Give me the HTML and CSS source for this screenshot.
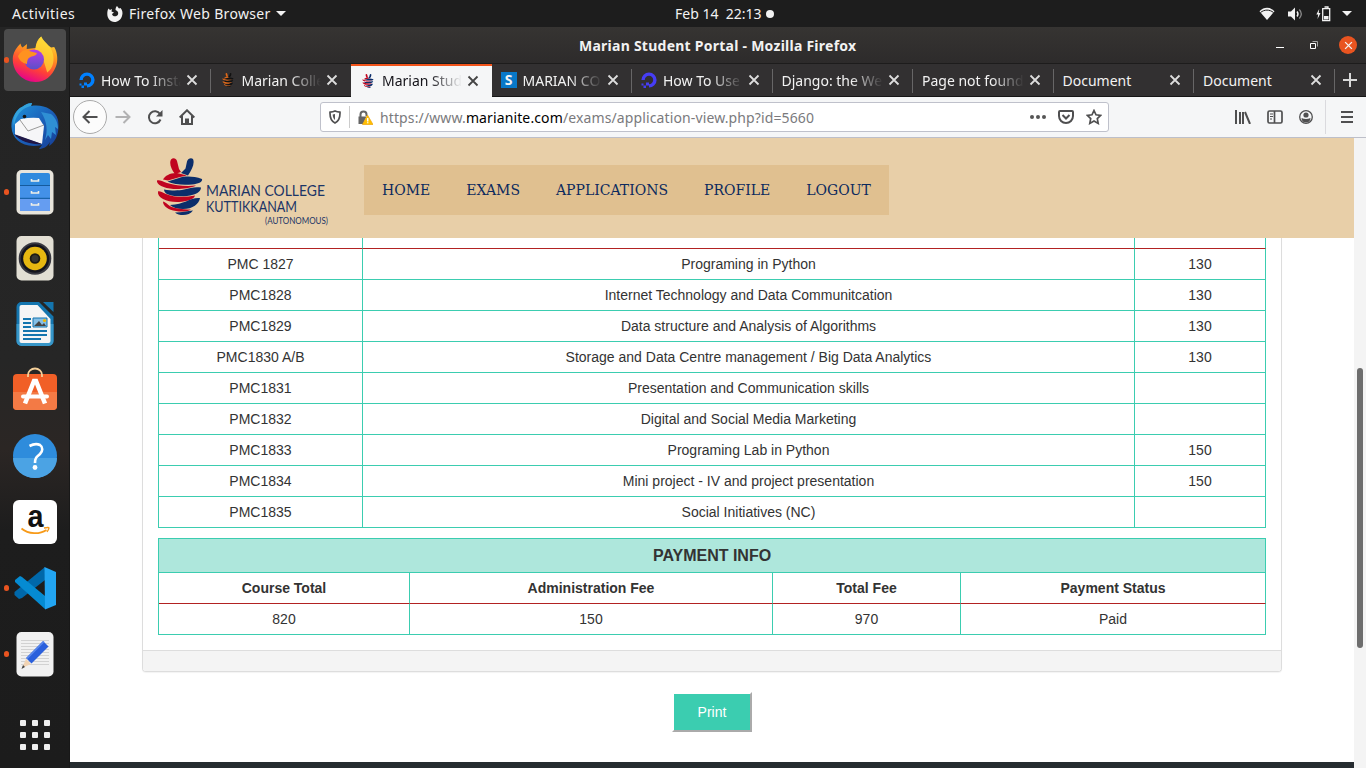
FILE: index.html
```html
<!DOCTYPE html>
<html lang="en">
<head>
<meta charset="utf-8">
<title>Marian Student Portal</title>
<link rel="stylesheet" href="styles.css">
</head>
<body>
<svg width="0" height="0" class="defs">
  <defs>
    <symbol id="x" viewBox="0 0 12 12"><path d="M1.500 1.500l9 9M10.500 1.500l-9 9" fill="none" stroke="currentColor" stroke-width="1.800"/></symbol>
    <symbol id="ocean" viewBox="0 0 16 16"><path d="M8 13.900A5.900 5.900 0 1 0 2.100 8" fill="none" stroke="currentColor" stroke-width="3.400"/><path d="M5 10.500h3v3H5zM2.500 13.500H5V16H2.500zM.5 11.500h2v2h-2z" fill="currentColor"/></symbol>
    <symbol id="fruit" viewBox="0 0 46 57">
      <path class="fa" d="M14 1.500c2-2 5-1.500 6 1.500l2 8 2 3-6 2C14 11 12 5 14 1.500z"/>
      <path class="fb" d="M36 1c-2-1.500-5-.5-6 2.500l-1.500 7L24 15l7 2.500C35 12 38 5 36 1z"/>
      <path class="fa" d="M6 21.500c2-4 8-7 14-6.500l10 2.500-7 1.500-12 3.500z"/>
      <path class="fb" d="M10.500 23.500L22 20c6-2 14-2 23 1 1 3-4 5-10 5.500-8 .5-18 .5-24.500-3z"/>
      <path class="fa" d="M0 22.500c2-1 5 .5 10 2.500 9 2.500 19 3.500 29 2.500-3 2-10 3-17 3.500C11 31.500-1 28 0 22.500z"/>
      <path class="fb" d="M7 31.500c9 1.500 15 1 20 0 6-1.500 11-3 17-2 0 4-5 7.500-14 8.500C20 39 7 38 7 31.500z"/>
      <path class="fa" d="M1 33.500c1-1 4 .5 8 2.500 8 3.500 19 3.500 29 1.500-1 4-8 6-16 6.500C10 44.500 0 40 1 33.500z"/>
      <path class="fb" d="M13 47c7-.5 12-2 16-3.500 5-2.500 9-4 14-3.500-1 6-7 11-17 11-6 0-10-1.500-13-4z"/>
      <path class="fa" d="M6 43.500c4 1 5 5 12 6.500 6 1.500 12 1.500 16 1.500-4 2.500-10 2.500-15 1.500C11 52 6 48 6 43.500z"/>
      <path class="fb" d="M18 54.500c7 0 12-1.500 18-2-2 3-6 4.500-10 4.500-3 0-6-.5-8-2.500z"/>
    </symbol>
  </defs>
</svg>

<header class="topbar">
  <span class="activities">Activities</span>
  <svg class="ffmini" width="16" height="16" viewBox="0 0 16 16"><path d="M1.500 2.500L3 4l2-1-.5 2.500L7 6.500 5 8c.5 3 5 3 6 .5.800-2-.5-4-2.500-4.500C8.500 2 9 1 10 0l2 2.500L13.500 2c2 2 2.500 5 1.500 8-1 3.500-4 6-7.500 6C3 15.800.3 12 .3 8c0-2 .2-4 1.200-5.500z" fill="#f2f2f2"/></svg>
  <span class="appname">Firefox Web Browser</span>
  <i class="caret"></i>
  <span class="clock">Feb 14&nbsp; 22:13</span><i class="clockdot"></i>
  <div class="status">
    <svg width="16" height="14" viewBox="0 0 16 14"><path d="M.5 4.200C5-.4 11-.4 15.500 4.200L8 13z" fill="#f2f2f2"/><path d="M1.500 5.500c4-3.200 9-3.200 13 0" fill="none" stroke="#1d1d1d" stroke-width="1"/></svg>
    <svg width="15" height="14" viewBox="0 0 15 14"><path d="M0 4.500h3L7 .5v13l-4-4H0z" fill="#f2f2f2"/><path d="M9 4.500q2 2.500 0 5" fill="none" stroke="#f2f2f2" stroke-width="1.400"/><path d="M11.300 2.500q4 4.500 0 9" fill="none" stroke="#8a8a8a" stroke-width="1.300"/></svg>
    <svg width="15" height="16" viewBox="0 0 15 16"><path d="M3.200 3L.3 8.500h1.900L1.500 13l3-6H2.700z" fill="#f2f2f2"/><path d="M6.700 2.700h7v12h-7zM8.500 1h3.500v1.500" fill="none" stroke="#f2f2f2" stroke-width="1.300"/><path d="M8 10h4.500v3.500H8z" fill="#f2f2f2"/></svg>
    <i class="caret"></i>
  </div>
</header>

<div class="desk">
  <nav class="dock">
    <div class="slot run active"><svg width="48" height="48" viewBox="0 0 48 48">
      <defs><linearGradient id="g1" x1=".75" y1="0" x2=".35" y2="1"><stop offset="0" stop-color="#ffe23c"/><stop offset=".35" stop-color="#ff9a1f"/><stop offset=".7" stop-color="#ff4038"/><stop offset="1" stop-color="#e4008f"/></linearGradient>
      <linearGradient id="g1b" x1="0" y1="0" x2="0" y2="1"><stop offset="0" stop-color="#b83be8"/><stop offset="1" stop-color="#5a50c8"/></linearGradient></defs>
      <path d="M2 20c1-5 4-9 7.500-12.500.4 2 1 3 2 4L16 8l-.3 5 9-1c0-5 2-8.500 5.500-11.500 1.500 4 5 6 7 9l3 2 3-.5c3.500 6 4 14 1.500 20C41 40 34 46 24.500 46 11 46 0 34 2 20z" fill="url(#g1)"/>
      <path d="M24 14c1-6 3-10.500 6.200-13.500 2 5 9 8.500 11 15 3 8 1 17-5 21l-4-13z" fill="#ffde38" opacity=".7"/>
      <circle cx="23" cy="23.500" r="10" fill="url(#g1b)"/><path d="M7 20c2-3 4-6 8-6l5 1.500 6 1.500c-1 4-7 2.500-9 6-1 2-1 4-1 5-5-1-8-4-9-8z" fill="#ff9220"/></svg></div>
    <div class="slot"><svg width="48" height="48" viewBox="0 0 48 48">
      <defs><linearGradient id="g2" x1="0" y1="0" x2="1" y2="1"><stop offset="0" stop-color="#1f98dc"/><stop offset=".5" stop-color="#1b61ba"/><stop offset="1" stop-color="#163c93"/></linearGradient></defs>
      <path d="M9 6c4-2 7-5 12-5l-1 3c12-2 24 3 27 14 2 12-2 22-9 26l1-4c-3 5-7 7-11 7l3-4C13 47 1 38 .5 25 0 17 4 10 9 6z" fill="url(#g2)"/>
      <path d="M30 10l10 2c5 4 7 9 7 15l-3-2 1 8-4-3-1 7-3-4-3 5c3-9 2-19-4-28z" fill="#2f8fd4"/>
      <path d="M9 6c4-2 7-5 12-5l-1 3c-5 1-10 4-13 9-2 3-4 8-4 11-2-7 1-14 6-18z" fill="#35a3dc"/>
      <path d="M4 22l6-5q10-2 18-1l5 8-2 18L4 33z" fill="#f6f6f8"/><path d="M9 18l8 11 16-6" fill="none" stroke="#999" stroke-width="1"/><path d="M3 32l28 10c-9 1-22-2-28-10z" fill="#1f1645"/><circle cx="13.500" cy="14.500" r="1.800" fill="#141414"/></svg></div>
    <div class="slot run"><svg width="48" height="48" viewBox="0 0 48 48"><rect x="5.500" y="2" width="37" height="44.500" rx="5" fill="#e8e5dc"/><rect x="9" y="5" width="30" height="38" rx="2" fill="#2f8ade"/><path d="M9 18h30v12H9z" fill="#4391e8"/><path d="M9 31h30v12H9z" fill="#659df1"/><path d="M9 17.500h30M9 30.300h30" stroke="#155b9e"/><path d="M20.500 11v2h7v-2M20.500 23v2h7v-2M20.500 35v2h7v-2" fill="none" stroke="#f0efe8" stroke-width="1.600"/></svg></div>
    <div class="slot"><svg width="48" height="48" viewBox="0 0 48 48"><rect x="5.500" y="2" width="37" height="44.500" rx="5" fill="#e2dfd4"/><circle cx="24" cy="24.500" r="16.300" fill="#383840"/><circle cx="24" cy="24.500" r="14.300" fill="#14141d"/><circle cx="24" cy="24.500" r="11.800" fill="#e6b711"/><circle cx="24" cy="24.500" r="5.300" fill="#1d1b13"/><circle cx="24" cy="24.500" r="3.500" fill="#353531"/></svg></div>
    <div class="slot"><svg width="48" height="48" viewBox="0 0 48 48"><path d="M10.500 2H28l14.500 14.500V41a5 5 0 0 1-5 5h-27a5 5 0 0 1-5-5V7a5 5 0 0 1 5-5z" fill="#1475ae"/><path d="M5.500 24h37v17a5 5 0 0 1-5 5h-27a5 5 0 0 1-5-5z" fill="#3796c8"/><path d="M32 2h10.500v10z" fill="#1475ae"/><path d="M10.500 5h16L39.500 19v22q0 2-2 2h-27q-2 0-2-2V7q0-2 2-2z" fill="#f5f5f5"/><path d="M12 19h8M12 23h8M12 27h8M12 31h24M12 35h24M12 39h18" stroke="#1475ae" stroke-width="2"/><path d="M22 18h14v9H22z" fill="#85bfe6" stroke="#1475ae"/><path d="M23 26l5-5 3 4 2-2 2 3z" fill="#444"/><circle cx="33.500" cy="20.500" r="1.600" fill="#f2b600"/></svg></div>
    <div class="slot"><svg width="48" height="48" viewBox="0 0 48 48"><rect x="2" y="8" width="44" height="36" rx="4" fill="#f15f27"/><path d="M2 26h44v14a4 4 0 0 1-4 4H6a4 4 0 0 1-4-4z" fill="#f37a45"/><path d="M17 11V9a7 6.500 0 0 1 14 0v2" fill="none" stroke="#f5cf99" stroke-width="1.800"/><path d="M14 37.500L23 15h2l9 22.500" fill="none" stroke="#fff" stroke-width="4.500"/><path d="M12 30.500h24" stroke="#fff" stroke-width="4" stroke-linecap="round"/></svg></div>
    <div class="slot"><svg width="48" height="48" viewBox="0 0 48 48"><circle cx="24" cy="24" r="22" fill="#2e8cdc"/><path d="M2 26a22 20 0 0 0 44 0z" fill="#4ba3e4"/><path d="M18.500 14q6-3.200 10.500-1c3 2 3 6 0 9-3.500 3-5 4-5 9" fill="none" stroke="#fff" stroke-width="2.600"/><circle cx="24" cy="35.500" r="2.400" fill="#fff"/></svg></div>
    <div class="slot"><svg width="48" height="48" viewBox="0 0 48 48"><rect x="2" y="2" width="44" height="44" rx="6" fill="#fff"/><text x="16.500" y="29" font-size="31" class="a" textLength="16" lengthAdjust="spacingAndGlyphs">a</text><path d="M10.500 30.500c7 6 18 6 25 1.500" fill="none" stroke="#f79a18" stroke-width="1.700"/><path d="M33 30q5-1 5 0t-2 4" fill="none" stroke="#f79a18" stroke-width="1.300"/></svg></div>
    <div class="slot run"><svg width="48" height="48" viewBox="0 0 48 48"><path d="M34 3v13L11 34l-3 1-4.500-4v-3z" fill="#0068aa"/><path d="M34 45V32L11 13l-2-1-5 4v2z" fill="#058bd2"/><path d="M33.500 3L45 8v33l-11 4.500z" fill="#22a5f2"/></svg></div>
    <div class="slot run"><svg width="48" height="48" viewBox="0 0 48 48"><rect x="5.500" y="2" width="37" height="44.500" rx="5" fill="#f1f1f1"/><path d="M10 10.500h28M10 13.500h28M10 16.500h28M10 19.500h28M10 22.500h28M10 25.500h28M10 28.500h28M10 31.500h28M10 34.500h28" stroke="#d2d2d2"/><path d="M11 38l4-9 5 5z" fill="#f1d3b3"/><path d="M10.500 39l1.500-4 2 2z" fill="#444"/><path d="M15 28l17-17 5.500 5.500-17 17z" fill="#2b60dc"/><path d="M16 28.500l17-17" stroke="#5c8aed" stroke-width="1.500"/></svg></div>
    <div class="apps"><i></i><i></i><i></i><i></i><i></i><i></i><i></i><i></i><i></i></div>
  </nav>

  <section class="window">
    <div class="titlebar"><span class="wintitle">Marian Student Portal - Mozilla Firefox</span>
      <div class="winbtns"><i class="min"></i><svg width="8" height="8" viewBox="0 0 8 8"><path d="M.5 2.500h5v5h-5z" fill="none" stroke="#fff"/><path d="M2.500.5h5v5" fill="none" stroke="#a5a5a5"/></svg><b><svg width="9" height="9"><use href="#x"/></svg></b></div></div>
    <div class="tabs">
      <div class="tab"><svg class="fav blue"><use href="#ocean"/></svg><span>How To Insta</span><svg class="close"><use href="#x"/></svg></div>
      <div class="tab"><svg class="fav small orange"><use href="#fruit"/></svg><span>Marian Colle</span><svg class="close"><use href="#x"/></svg></div>
      <div class="tab current"><svg class="fav small redblue"><use href="#fruit"/></svg><span>Marian Stud</span><svg class="close"><use href="#x"/></svg></div>
      <div class="tab"><b class="sicon">S</b><span>MARIAN CO</span><svg class="close"><use href="#x"/></svg></div>
      <div class="tab"><svg class="fav indigo"><use href="#ocean"/></svg><span>How To Use</span><svg class="close"><use href="#x"/></svg></div>
      <div class="tab"><span>Django: the We</span><svg class="close"><use href="#x"/></svg></div>
      <div class="tab"><span>Page not found</span><svg class="close"><use href="#x"/></svg></div>
      <div class="tab"><span class="short">Document</span><svg class="close"><use href="#x"/></svg></div>
      <div class="tab"><span class="short">Document</span><svg class="close"><use href="#x"/></svg></div>
      <svg class="plus" width="14" height="14" viewBox="0 0 14 14"><path d="M7 0v14M0 7h14" stroke="#d8d8d8" stroke-width="2"/></svg>
    </div>
    <div class="toolbar">
      <div class="back"><svg width="16" height="16" viewBox="0 0 16 16"><path d="M15.500 8H1.500M7.500 2l-6 6 6 6" class="s"/></svg></div>
      <svg class="fwd" width="16" height="16" viewBox="0 0 16 16"><path d="M.5 8h14M8.500 2l6 6-6 6" class="s"/></svg>
      <svg class="reload" width="16" height="16" viewBox="0 0 16 16"><path d="M13 5A6 6 0 1 0 13.500 10.500" class="s"/><path d="M15.500 1v6.500H9z" fill="#4f4f50"/></svg>
      <svg class="home" width="16" height="16" viewBox="0 0 16 16"><path d="M.7 8.500L8 1.300l7.300 7.200M3 7v8h10V7" class="s"/><path d="M7 15v-4.500h2V15" class="s"/></svg>
      <div class="urlbar">
        <svg width="12" height="14" viewBox="0 0 12 14"><path d="M1 2.200Q4 2 6 1q2 1 5 1.200C11.200 8 9.500 11.500 6 13 2.500 11.500.8 8 1 2.200z" class="s thin"/><path d="M6 4v6c-1.500-1-2.300-3-2.300-5.500z" fill="#555"/></svg>
        <i class="sep"></i>
        <svg width="15" height="15" viewBox="0 0 15 15"><path d="M2.500 7V4.500a3 3 0 0 1 6 0V6" fill="none" stroke="#656565" stroke-width="2"/><path d="M.5 6.500h8L5 14H.5z" fill="#656565"/><path d="M9.500 5L15 14.500H4.500z" fill="#ffbf00" stroke="#eea30a" stroke-width=".7"/><path d="M9.700 8v3.500M9.700 12.300v1" stroke="#fff" stroke-width="1.500"/></svg>
        <span class="url">https://www.<em>marianite.com</em>/exams/application-view.php?id=5660</span>
        <svg class="dots" width="16" height="16" viewBox="0 0 16 16"><circle cx="2" cy="8" r="2"/><circle cx="8" cy="8" r="2"/><circle cx="14" cy="8" r="2"/></svg>
        <svg width="16" height="14" viewBox="0 0 16 14"><path d="M2 1h12q1 0 1 1v4a7 7 0 0 1-14 0V2q0-1 1-1zM4.500 5L8 8.500 11.500 5" class="s"/></svg>
        <svg width="16" height="16" viewBox="0 0 16 16"><path d="M8 1.500l2 4.300 4.700.6-3.400 3.200.9 4.800L8 12l-4.200 2.400.9-4.800L1.300 6.400 6 5.800z" class="s thin"/></svg>
      </div>
      <div class="tools">
        <svg width="16" height="14" viewBox="0 0 16 14"><path d="M1 0v14M5 2v12M8 2v12M10 2l5 12" class="s"/></svg>
        <svg width="16" height="14" viewBox="0 0 16 14"><path d="M2.500 1h11Q15 1 15 2.500v9q0 1.500-1.500 1.500h-11Q1 13 1 11.500v-9Q1 1 2.500 1zM7.500 1v12" class="s thin"/><path d="M3 4h3M3 6.500h3M3 9h2" stroke="#4f4f50"/></svg>
        <svg width="14" height="14" viewBox="0 0 14 14"><circle cx="7" cy="7" r="6.300" fill="none" stroke="#4f4f50" stroke-width="1.300"/><circle cx="7" cy="5" r="2.600" fill="#4f4f50"/><path d="M2.500 8Q7 10 11.500 8c0 3-2 4.500-4.500 4.500S2.500 11 2.500 8z" fill="#4f4f50"/></svg>
        <i class="sep"></i>
        <svg width="12" height="12" viewBox="0 0 12 12"><path d="M0 1h12M0 6h12M0 11h12" class="s"/></svg>
      </div>
    </div>

    <div class="viewport">
      <div class="page">
        <div class="sitehead">
          <svg class="logo" width="180" height="80" viewBox="0 0 180 80">
            <svg x="3" y="6" width="46" height="57" class="redblue" viewBox="0 0 46 57"><use href="#fruit"/></svg>
            <text x="52" y="43.500" font-size="15" textLength="119" lengthAdjust="spacingAndGlyphs">MARIAN COLLEGE</text>
            <text x="52" y="60" font-size="15" textLength="91" lengthAdjust="spacingAndGlyphs">KUTTIKKANAM</text>
            <text x="111" y="72" font-size="9" textLength="63" lengthAdjust="spacingAndGlyphs">(AUTONOMOUS)</text>
          </svg>
          <nav class="menu"><a>HOME</a><a>EXAMS</a><a>APPLICATIONS</a><a>PROFILE</a><a>LOGOUT</a></nav>
        </div>
        <div class="panel">
          <div class="body">
            <table class="courses">
              <colgroup><col class="c1"><col class="c2"><col class="c3"></colgroup>
              <tr class="head"><th></th><th></th><th></th></tr>
              <tr><td>PMC 1827</td><td>Programing in Python</td><td>130</td></tr>
              <tr><td>PMC1828</td><td>Internet Technology and Data Communitcation</td><td>130</td></tr>
              <tr><td>PMC1829</td><td>Data structure and Analysis of Algorithms</td><td>130</td></tr>
              <tr><td>PMC1830 A/B</td><td>Storage and Data Centre management / Big Data Analytics</td><td>130</td></tr>
              <tr><td>PMC1831</td><td>Presentation and Communication skills</td><td></td></tr>
              <tr><td>PMC1832</td><td>Digital and Social Media Marketing</td><td></td></tr>
              <tr><td>PMC1833</td><td>Programing Lab in Python</td><td>150</td></tr>
              <tr><td>PMC1834</td><td>Mini project - IV and project presentation</td><td>150</td></tr>
              <tr><td>PMC1835</td><td>Social Initiatives (NC)</td><td></td></tr>
            </table>
            <table class="payment">
              <colgroup><col class="p1"><col class="p2"><col class="p3"><col class="p4"></colgroup>
              <tr><th colspan="4" class="caption">PAYMENT INFO</th></tr>
              <tr class="head2"><th>Course Total</th><th>Administration Fee</th><th>Total Fee</th><th>Payment Status</th></tr>
              <tr><td>820</td><td>150</td><td>970</td><td>Paid</td></tr>
            </table>
          </div>
          <div class="panelfoot"></div>
        </div>
        <button class="print">Print</button>
        <div class="sitefoot"></div>
      </div>
      <div class="scroll"><i></i></div>
    </div>
  </section>
</div>
</body>
</html>
```
FILE: styles.css
```css
* { box-sizing: border-box; }
body { margin: 0; width: 1366px; height: 768px; overflow: hidden; background: #1d1d1d; font-family: "Noto Sans", sans-serif; font-size: 14px; color: #f2f2f2; display: flex; flex-direction: column; }
svg { display: block; flex: none; }
.defs { position: absolute; }
.topbar { height: 27px; flex: none; display: flex; align-items: center; background: #1d1d1d; padding: 0 14px 0 12px; white-space: nowrap; }
.activities { width: 63px; letter-spacing: .5px; }
.ffmini { margin: 0 6px 0 32px; }
.appname { width: 142px; letter-spacing: .33px; }
.caret { border: 5px solid transparent; border-top-color: #f2f2f2; border-bottom: 0; margin-left: 5px; }
.clock { margin-left: 389px; width: 87px; padding-bottom: 1px; }
.clockdot { width: 8px; height: 8px; border-radius: 4px; background: #f2f2f2; margin-left: 4px; }
.status { margin-left: auto; display: flex; align-items: center; gap: 13px; }
.status .caret { margin-left: -2px; }

.desk { flex: 1; display: flex; min-height: 0; }
.dock { width: 70px; background: linear-gradient(#242424, #262626 45%, #2b2624 57%, #1d1d1d 68%, #1c1c1c); border-right: 1px solid #181818; display: flex; flex-direction: column; }
.slot { height: 66px; flex: none; display: flex; align-items: center; padding-left: 4px; }
.slot::before { content: ""; width: 5px; height: 6px; border-radius: 3px; margin-right: 2px; }
.slot.run::before { background: #e95420; }
.slot.active { width: 62px; background: #4b4b4b; height: 62px; border-radius: 4px; margin: 2px 4px 2px; padding-left: 0; }
.a { font-family: "Liberation Sans", sans-serif; font-weight: bold; fill: #111; }
.apps { display: grid; grid-template-columns: repeat(3, 6px); gap: 6px; margin: 33px 0 0 20px; }
.apps i { width: 6px; height: 6px; border-radius: 1px; background: #eee; }

.window { flex: 1; min-width: 0; display: flex; flex-direction: column; }
.titlebar { height: 37px; flex: none; display: flex; align-items: center; background: linear-gradient(#363432, #2d2b2b); border-bottom: 1px solid #1d1c1c; padding: 0 9px 0 509px; font-weight: bold; }
.wintitle { white-space: nowrap; width: 278px; letter-spacing: .25px; }
.winbtns { margin-left: auto; display: flex; align-items: center; gap: 26px; }
.winbtns b { width: 18px; height: 18px; border-radius: 9px; background: #e95420; display: flex; align-items: center; justify-content: center; margin-left: -5px; }
.min { width: 8px; height: 1px; background: #fff; margin-top: 4px; }

.tabs { height: 33px; flex: none; display: flex; background: #323031; border-bottom: 1px solid #161616; }
.tab { width: 140.500px; flex: none; display: flex; align-items: center; padding: 0 13px 0 9px; position: relative; }
.tab::after { content: ""; position: absolute; right: 0; top: 5px; width: 1px; height: 24px; background: #676667; }
.tab span { flex: 1; min-width: 0; white-space: nowrap; -webkit-mask-image: linear-gradient(90deg, #000 calc(100% - 32px), transparent); mask-image: linear-gradient(90deg, #000 calc(100% - 32px), transparent); }
.tab span.short { -webkit-mask-image: none; mask-image: none; }
.tab.current { background: #f5f6f7; color: #15141a; border-top: 2px solid #f2541b; padding-bottom: 2px; height: 33px; }
.tab.current::after, .tab:has(+ .current)::after { display: none; }
.fav { width: 16px; height: 16px; margin-right: 6px; }
.fav.small { height: 14px; }
.blue { color: #0080ff; }
.indigo { color: #463df5; }
.orange { --fa: #df6717; --fb: #111; }
.redblue { --fa: #c0041f; --fb: #0c2e6b; }
.fa { fill: var(--fa); }
.fb { fill: var(--fb); }
.sicon { width: 16px; height: 16px; background: #0878c8; font-size: 14px; line-height: 16px; text-align: center; margin-right: 6px; }
.close { width: 12px; height: 12px; margin-left: 5px; color: #ddd; }
.current .close { color: #444; }
.plus { margin: 9px 0 0 8px; }

.toolbar { height: 41px; flex: none; display: flex; align-items: center; background: #f5f6f7; border-bottom: 1px solid #bdbfc9; }
.s { fill: none; stroke: #4f4f50; stroke-width: 2; }
.thin { stroke-width: 1.700; }
.back { width: 34px; height: 34px; border: 1px solid #aaa; border-radius: 17px; background: #fcfcfc; margin-left: 3px; display: flex; align-items: center; justify-content: center; }
.fwd { margin-left: 8px; opacity: .4; }
.reload { margin-left: 16px; }
.home { margin-left: 16px; }
.urlbar { width: 789px; height: 30px; margin-left: 125px; border: 1px solid #bfc1cb; border-radius: 3px; background: #fff; display: flex; align-items: center; padding: 0 6px 0 8px; }
.urlbar .sep { width: 1px; height: 22px; background: #ccc; margin: 0 8px; }
.url { color: #7a7a7d; margin-left: 7px; flex: 1; white-space: nowrap; letter-spacing: .12px; }
.url em { color: #000; font-style: normal; }
.dots { fill: #555; }
.urlbar svg + svg { margin-left: 12px; }
.tools { flex: 1; display: flex; align-items: center; padding-left: 126px; }
.tools svg { margin-right: 16px; }
.tools svg:nth-child(3) { margin-right: 12px; }
.tools .sep { width: 1px; height: 34px; background: #dadade; margin-right: 15px; }
.tools svg:last-child { margin: 0; }

.viewport { flex: 1; min-height: 0; display: flex; background: #fff; color: #333; font: 14px/20px "Liberation Sans", Arial, sans-serif; }
.page { width: 1284px; display: flex; flex-direction: column; }
.sitehead { height: 100px; flex: none; background: #e8cfa8; display: flex; align-items: flex-start; padding: 14px 0 0 84px; }
.logo text { font-family: Lato, sans-serif; fill: #1b3567; }
.menu { margin: 13px 0 0 30px; height: 50px; width: 525px; background: #e0c090; display: flex; align-items: center; font: 14px "DejaVu Serif", serif; color: #0c2a5e; }
.menu a { padding: 0 18px; }
.panel { width: 1140px; flex: none; margin-left: 72px; border: 1px solid #ddd; border-top: 0; border-radius: 0 0 4px 4px; box-shadow: 0 1px 1px rgba(0,0,0,.05); }
.body { padding: 0 15px 15px; }
table { width: 1108px; table-layout: fixed; border-collapse: separate; border-spacing: 0; border-left: 1px solid #3bcdb0; }
td, th { height: 31px; padding: 0; text-align: center; border: solid #3bcdb0; border-width: 0 1px 1px 0; }
.courses .head th { height: 11px; line-height: 0; border-bottom-color: #b22222; }
.c1 { width: 204px; } .c2 { width: 772px; } .c3 { width: 131px; }
.p1 { width: 251px; } .p2 { width: 363px; } .p3 { width: 188px; } .p4 { width: 305px; }
.payment { margin-top: 10px; border-top: 1px solid #3bcdb0; }
.payment .caption { height: 34px; background: #aee7dc; font-size: 16px; }
.head2 th { border-bottom-color: #b22222; }
.panelfoot { height: 21px; background: #f4f4f4; border-top: 1px solid #ddd; border-radius: 0 0 3px 3px; }
.print { width: 80px; height: 40px; flex: none; margin: 20px 0 0 602px; padding: 0; border: 2px solid; border-color: #fff #aaa #aaa #fff; background: #3bcdb0; color: #fff; font: inherit; }
.sitefoot { margin-top: auto; height: 6px; background: #262c30; }
.scroll { width: 12px; background: #f4f4f4; padding: 230px 3px 0; }
.scroll i { display: block; height: 280px; border-radius: 3px; background: #6e6e6e; }
```
